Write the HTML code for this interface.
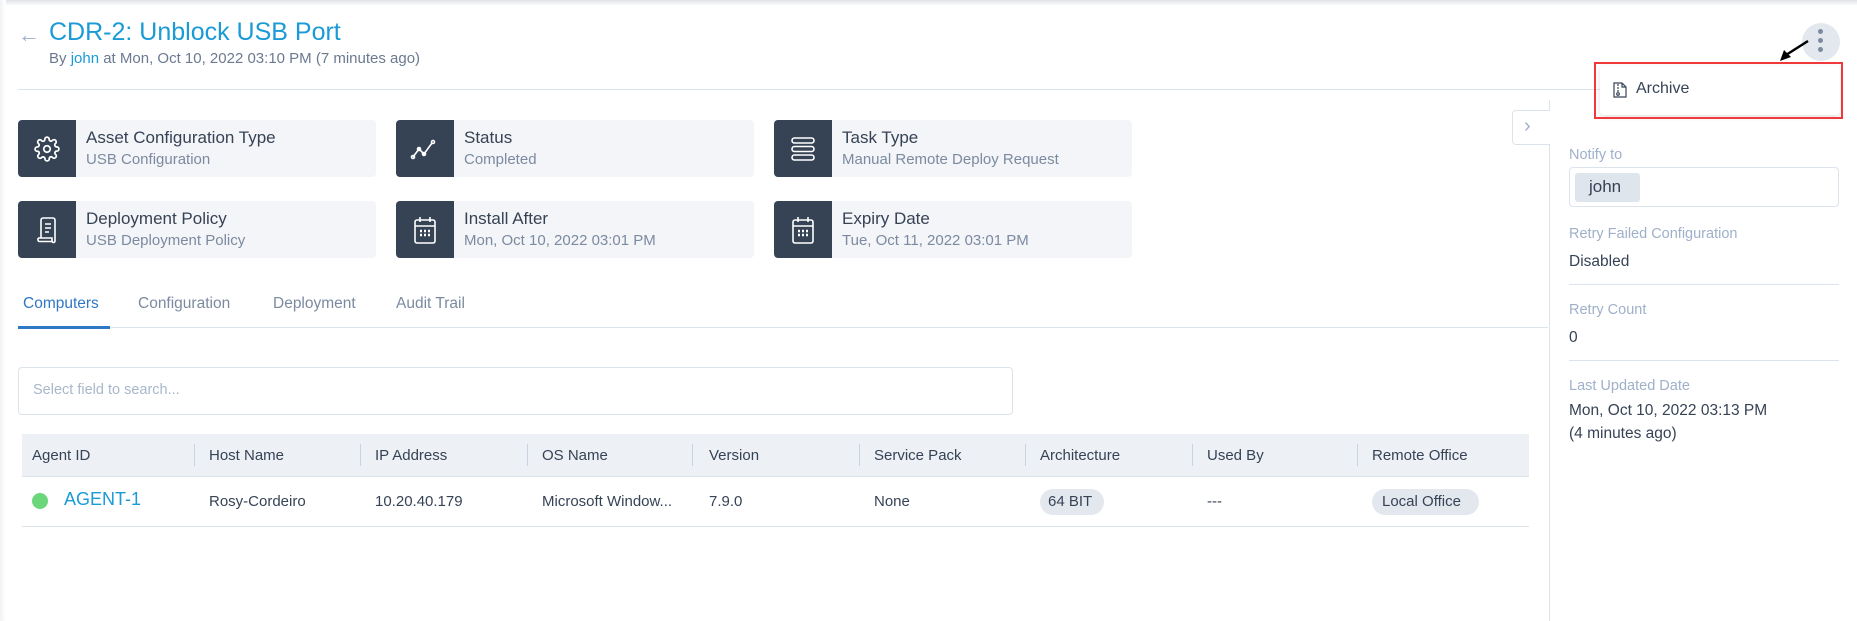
<!DOCTYPE html>
<html><head><meta charset="utf-8"><style>
*{box-sizing:border-box;margin:0;padding:0}
body{width:1857px;height:621px;background:#fff;font-family:"Liberation Sans",sans-serif;position:relative;overflow:hidden;color:#364355}
.a{position:absolute;white-space:nowrap}
.top{position:absolute;left:0;top:0;width:1857px;height:6px;background:linear-gradient(#dfe2e7,#fff)}
.left{position:absolute;left:0;top:0;width:6px;height:621px;background:linear-gradient(90deg,#f1f2f4,#fff)}
.card{position:absolute;width:358px;height:57px;background:#f4f5f8;border-radius:4px}
.card .ic{position:absolute;left:0;top:0;width:58px;height:100%;background:#364355;border-radius:4px 0 0 4px;display:flex;align-items:center;justify-content:center}
.card .t{position:absolute;left:68px;top:8px;font-size:17px;color:#364355}
.card .s{position:absolute;left:68px;top:31px;font-size:15px;color:#7b8aa0}
.tab{position:absolute;top:295px;font-size:15.5px;color:#7b8aa0}
.th{position:absolute;top:447px;font-size:15px;color:#364355}
.dv{position:absolute;top:444px;width:1px;height:22px;background:#c9d2df}
.td{position:absolute;top:493px;font-size:15px;color:#364355}
.lbl{position:absolute;left:1569px;font-size:14.5px;color:#9fb0c9}
.val{position:absolute;left:1569px;font-size:15.5px;color:#364355}
.hl{position:absolute;left:1569px;width:270px;height:1px;background:#dde3ea}
</style></head><body>
<div class="top"></div><div class="left"></div>
<div class="a" style="left:18px;top:22px;font-size:22px;color:#9fb0c9">←</div>
<div class="a" style="left:49px;top:18px;font-size:25px;color:#1a9ad6">CDR-2: Unblock USB Port</div>
<div class="a" style="left:49px;top:50px;font-size:15px;color:#6b7a90">By <span style="color:#1a9ad6">john</span> at Mon, Oct 10, 2022 03:10 PM (7 minutes ago)</div>
<div class="a" style="left:18px;top:89px;width:1590px;height:1px;background:#dde3ea"></div>

<div class="card" style="left:18px;top:120px"><div class="ic"><svg width="26" height="26" viewBox="0 0 24 24" fill="none" stroke="#fff" stroke-width="1.6"><circle cx="12" cy="12" r="3"/><path d="M19.4 15a1.7 1.7 0 0 0 .3 1.8l.1.1a2 2 0 1 1-2.8 2.8l-.1-.1a1.7 1.7 0 0 0-1.8-.3 1.7 1.7 0 0 0-1 1.5V21a2 2 0 1 1-4 0v-.1a1.7 1.7 0 0 0-1.1-1.5 1.7 1.7 0 0 0-1.8.3l-.1.1a2 2 0 1 1-2.8-2.8l.1-.1a1.7 1.7 0 0 0 .3-1.8 1.7 1.7 0 0 0-1.5-1H3a2 2 0 1 1 0-4h.1a1.7 1.7 0 0 0 1.5-1.1 1.7 1.7 0 0 0-.3-1.8l-.1-.1a2 2 0 1 1 2.8-2.8l.1.1a1.7 1.7 0 0 0 1.8.3H9a1.7 1.7 0 0 0 1-1.5V3a2 2 0 1 1 4 0v.1a1.7 1.7 0 0 0 1 1.5 1.7 1.7 0 0 0 1.8-.3l.1-.1a2 2 0 1 1 2.8 2.8l-.1.1a1.7 1.7 0 0 0-.3 1.8V9a1.7 1.7 0 0 0 1.5 1H21a2 2 0 1 1 0 4h-.1a1.7 1.7 0 0 0-1.5 1z"/></svg></div><div class="t">Asset Configuration Type</div><div class="s">USB Configuration</div></div>
<div class="card" style="left:396px;top:120px"><div class="ic"><svg width="30" height="24" viewBox="0 0 30 24" fill="none" stroke="#fff" stroke-width="1.6"><path d="M3 20l6-8 5 5 8-11"/><circle cx="3" cy="20" r="1.5"/><circle cx="9" cy="12" r="1.5"/><circle cx="14" cy="17" r="1.5"/><circle cx="23" cy="5" r="1.5"/></svg></div><div class="t">Status</div><div class="s">Completed</div></div>
<div class="card" style="left:774px;top:120px"><div class="ic"><svg width="26" height="28" viewBox="0 0 26 28" fill="none" stroke="#fff" stroke-width="1.6"><rect x="2" y="3" width="22" height="5" rx="2.5"/><rect x="2" y="11.5" width="22" height="5" rx="2.5"/><rect x="2" y="20" width="22" height="5" rx="2.5"/></svg></div><div class="t">Task Type</div><div class="s">Manual Remote Deploy Request</div></div>
<div class="card" style="left:18px;top:201px"><div class="ic"><svg width="24" height="28" viewBox="0 0 24 28" fill="none" stroke="#fff" stroke-width="1.6"><path d="M6 22V4a2 2 0 0 1 2-2h10a2 2 0 0 1 2 2v18"/><path d="M3 22h14v3a1.5 1.5 0 0 0 3 0v-3"/><path d="M3 22v2a1.5 1.5 0 0 0 1.5 1.5H18"/><path d="M10 8h6M10 12h6M10 16h4"/></svg></div><div class="t">Deployment Policy</div><div class="s">USB Deployment Policy</div></div>
<div class="card" style="left:396px;top:201px"><div class="ic"><svg width="26" height="30" viewBox="0 0 26 30" fill="none" stroke="#fff" stroke-width="1.6"><rect x="3" y="5" width="20" height="23" rx="2"/><path d="M3 11h20M8 2v5M18 2v5"/><path d="M8 16h2M12 16h2M16 16h2M8 20h2M12 20h2M16 20h2" stroke-width="2.5"/></svg></div><div class="t">Install After</div><div class="s">Mon, Oct 10, 2022 03:01 PM</div></div>
<div class="card" style="left:774px;top:201px"><div class="ic"><svg width="26" height="30" viewBox="0 0 26 30" fill="none" stroke="#fff" stroke-width="1.6"><rect x="3" y="5" width="20" height="23" rx="2"/><path d="M3 11h20M8 2v5M18 2v5"/><path d="M8 16h2M12 16h2M16 16h2M8 20h2M12 20h2M16 20h2" stroke-width="2.5"/></svg></div><div class="t">Expiry Date</div><div class="s">Tue, Oct 11, 2022 03:01 PM</div></div>

<div class="tab" style="left:23px;color:#2f78c4">Computers</div>
<div class="tab" style="left:138px">Configuration</div>
<div class="tab" style="left:273px">Deployment</div>
<div class="tab" style="left:396px">Audit Trail</div>
<div class="a" style="left:18px;top:327px;width:1530px;height:1px;background:#dde3ea"></div>
<div class="a" style="left:18px;top:326px;width:92px;height:3px;background:#2f78c4"></div>

<div class="a" style="left:18px;top:367px;width:995px;height:48px;border:1px solid #dde3ea;border-radius:4px"></div>
<div class="a" style="left:33px;top:382px;font-size:14.5px;color:#a9b7cb">Select field to search...</div>

<div class="a" style="left:22px;top:434px;width:1507px;height:43px;background:#edf0f5"></div>
<div class="a" style="left:22px;top:476px;width:1507px;height:1px;background:#dde3ea"></div>
<div class="th" style="left:32px">Agent ID</div>
<div class="dv" style="left:194px"></div><div class="th" style="left:209px">Host Name</div>
<div class="dv" style="left:360px"></div><div class="th" style="left:375px">IP Address</div>
<div class="dv" style="left:527px"></div><div class="th" style="left:542px">OS Name</div>
<div class="dv" style="left:692px"></div><div class="th" style="left:709px">Version</div>
<div class="dv" style="left:859px"></div><div class="th" style="left:874px">Service Pack</div>
<div class="dv" style="left:1025px"></div><div class="th" style="left:1040px">Architecture</div>
<div class="dv" style="left:1192px"></div><div class="th" style="left:1207px">Used By</div>
<div class="dv" style="left:1357px"></div><div class="th" style="left:1372px">Remote Office</div>

<div class="a" style="left:32px;top:493px;width:16px;height:16px;border-radius:50%;background:#6bd67a"></div>
<div class="a" style="left:64px;top:489px;font-size:18px;color:#1a9ad6">AGENT-1</div>
<div class="td" style="left:209px">Rosy-Cordeiro</div>
<div class="td" style="left:375px">10.20.40.179</div>
<div class="td" style="left:542px">Microsoft Window...</div>
<div class="td" style="left:709px">7.9.0</div>
<div class="td" style="left:874px">None</div>
<div class="a" style="left:1040px;top:489px;width:64px;height:26px;border-radius:13px;background:#e3e8ef"></div>
<div class="td" style="left:1048px">64 BIT</div>
<div class="td" style="left:1207px">---</div>
<div class="a" style="left:1372px;top:489px;width:107px;height:26px;border-radius:13px;background:#e3e8ef"></div>
<div class="td" style="left:1382px">Local Office</div>
<div class="a" style="left:22px;top:526px;width:1507px;height:1px;background:#dde3ea"></div>

<div class="a" style="left:1549px;top:100px;width:1px;height:521px;background:#dde3ea"></div>
<div class="a" style="left:1512px;top:110px;width:38px;height:35px;border:1px solid #dde3ea;border-right:none;border-radius:4px 0 0 4px;background:#fff"></div>
<div class="a" style="left:1524px;top:115px;font-size:20px;color:#9fb0c9">›</div>

<div class="a" style="left:1802px;top:23px;width:38px;height:38px;border-radius:50%;background:#e3e8ef"></div>
<div class="a" style="left:1818px;top:29px;width:5px;height:5px;border-radius:50%;background:#7b8aa0"></div>
<div class="a" style="left:1818px;top:38px;width:5px;height:5px;border-radius:50%;background:#7b8aa0"></div>
<div class="a" style="left:1818px;top:47px;width:5px;height:5px;border-radius:50%;background:#7b8aa0"></div>
<svg class="a" style="left:1772px;top:36px" width="40" height="30"><path d="M36 5L14 19" stroke="#000" stroke-width="2.5"/><path d="M8 25l4-11 7 7z" fill="#000"/></svg>

<div class="a" style="left:1600px;top:66px;width:240px;height:49px;background:#fff;border-radius:4px;box-shadow:0 2px 6px rgba(0,0,0,.12)"></div>
<div class="a" style="left:1594px;top:62px;width:249px;height:57px;border:2.5px solid #f0393b"></div>
<svg class="a" style="left:1613px;top:82px" width="14" height="16" viewBox="0 0 14 16" fill="none" stroke="#364355" stroke-width="1.2"><path d="M1 1h8l4 4v10H1z"/><path d="M9 1v4h4"/><path d="M5 2v2M5 5v2M5 8v2"/><circle cx="5" cy="12" r="1.3"/></svg>
<div class="a" style="left:1636px;top:80px;font-size:16px;color:#364355">Archive</div>

<div class="lbl" style="top:147px">Notify to</div>
<div class="a" style="left:1569px;top:167px;width:270px;height:40px;border:1px solid #dde3ea;border-radius:4px"></div>
<div class="a" style="left:1575px;top:173px;width:65px;height:29px;border-radius:3px;background:#dfe5ed"></div>
<div class="a" style="left:1589px;top:177px;font-size:17px;color:#364355">john</div>
<div class="lbl" style="top:226px">Retry Failed Configuration</div>
<div class="val" style="top:253px">Disabled</div>
<div class="hl" style="top:284px"></div>
<div class="lbl" style="top:302px">Retry Count</div>
<div class="val" style="top:329px">0</div>
<div class="hl" style="top:360px"></div>
<div class="lbl" style="top:378px">Last Updated Date</div>
<div class="val" style="top:402px">Mon, Oct 10, 2022 03:13 PM</div>
<div class="val" style="top:425px">(4 minutes ago)</div>
</body></html>
